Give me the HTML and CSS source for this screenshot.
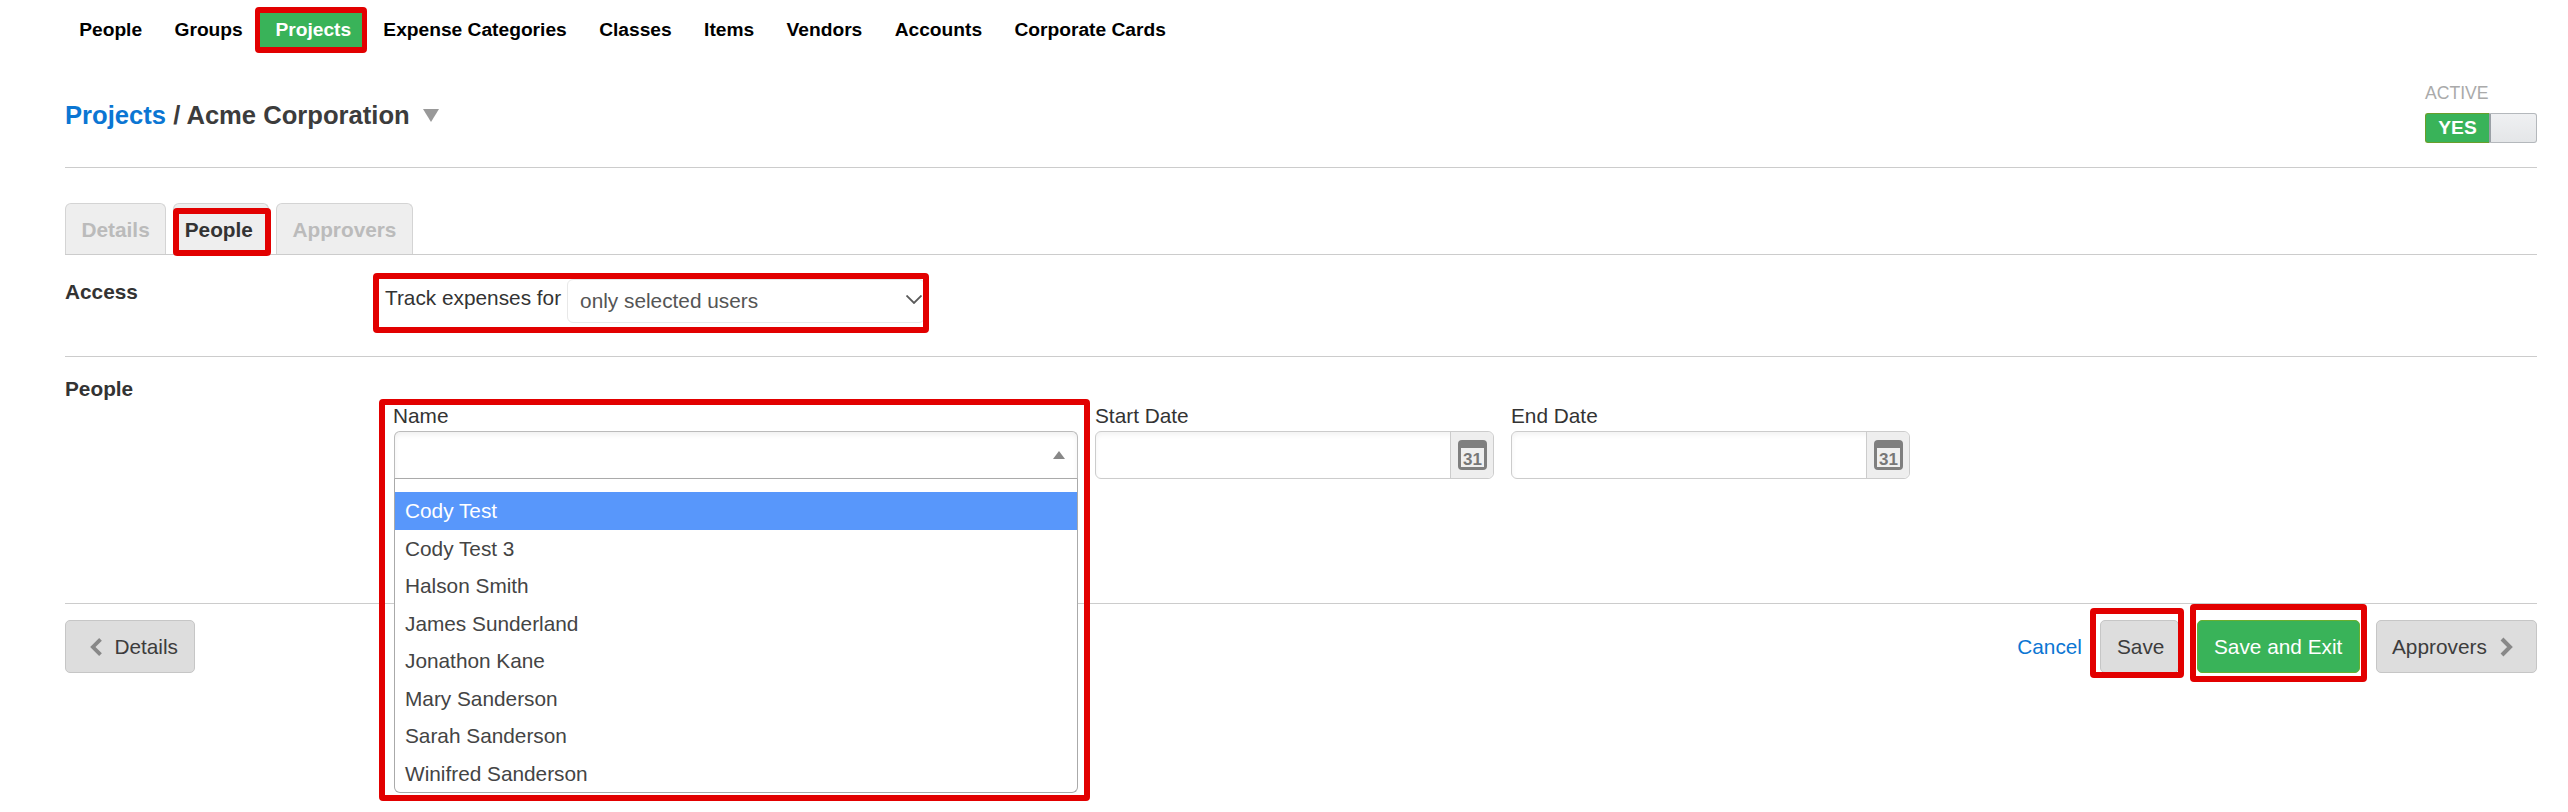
FILE: index.html
```html
<!DOCTYPE html>
<html lang="en">
<head>
    <meta charset="UTF-8">
    <meta name="viewport" content="width=device-width, initial-scale=1.0">
    <title>Projects / Acme Corporation</title>
    <link rel="stylesheet" href="styles.css">
</head>
<body>
    <nav class="top-nav">
        <a class="nav-link" href="#">People</a>
        <a class="nav-link" href="#">Groups</a>
        <a class="nav-link nav-link-active" href="#">Projects<span class="mark"></span></a>
        <a class="nav-link" href="#">Expense Categories</a>
        <a class="nav-link" href="#">Classes</a>
        <a class="nav-link" href="#">Items</a>
        <a class="nav-link" href="#">Vendors</a>
        <a class="nav-link" href="#">Accounts</a>
        <a class="nav-link" href="#">Corporate Cards</a>
    </nav>

    <main class="page">
        <header class="title-row">
            <h1 class="title"><a href="#">Projects</a> / Acme Corporation<span class="title-caret"></span></h1>
            <div class="active-box">
                <div class="active-label">ACTIVE</div>
                <div class="toggle">
                    <span class="toggle-on">YES</span>
                    <span class="toggle-off"></span>
                </div>
            </div>
        </header>

        <div class="tabs">
            <a class="tab" href="#">Details</a>
            <a class="tab tab-active" href="#">People<span class="mark"></span></a>
            <a class="tab" href="#">Approvers</a>
        </div>

        <section class="access-row">
            <div class="section-label">Access</div>
            <div class="track-row">
                <span class="track-label">Track expenses for</span>
                <div class="track-select">
                    <span>only selected users</span>
                    <svg class="track-chevron" width="16" height="9" viewBox="0 0 16 9"><polyline points="0.5,0.5 8,8 15.5,0.5" fill="none" stroke="#5a5a5a" stroke-width="1.8"/></svg>
                </div>
                <span class="mark"></span>
            </div>
        </section>

        <section class="people-row">
            <div class="section-label">People</div>
            <div class="fields">
                <div class="field field-name">
                    <label class="field-label">Name</label>
                    <div class="combo">
                        <span class="combo-arrow"></span>
                    </div>
                    <ul class="combo-list">
                        <li class="combo-item combo-item-active">Cody Test</li>
                        <li class="combo-item">Cody Test 3</li>
                        <li class="combo-item">Halson Smith</li>
                        <li class="combo-item">James Sunderland</li>
                        <li class="combo-item">Jonathon Kane</li>
                        <li class="combo-item">Mary Sanderson</li>
                        <li class="combo-item">Sarah Sanderson</li>
                        <li class="combo-item">Winifred Sanderson</li>
                    </ul>
                    <span class="mark"></span>
                </div>
                <div class="field field-date">
                    <label class="field-label">Start Date</label>
                    <div class="date-input">
                        <span class="date-addon">
                            <svg width="29" height="30" viewBox="0 0 29 30"><rect width="29" height="30" rx="4" fill="#7f7f7f"/><rect x="3" y="8" width="23" height="19" fill="#efefef"/><text x="14.5" y="24.5" text-anchor="middle" class="cal-text">31</text></svg>
                        </span>
                    </div>
                </div>
                <div class="field field-date">
                    <label class="field-label">End Date</label>
                    <div class="date-input">
                        <span class="date-addon">
                            <svg width="29" height="30" viewBox="0 0 29 30"><rect width="29" height="30" rx="4" fill="#7f7f7f"/><rect x="3" y="8" width="23" height="19" fill="#efefef"/><text x="14.5" y="24.5" text-anchor="middle" class="cal-text">31</text></svg>
                        </span>
                    </div>
                </div>
            </div>
        </section>

        <footer class="actions">
            <button class="btn btn-back">
                <svg width="13" height="20" viewBox="0 0 13 20"><polyline points="11,2 3,10 11,18" fill="none" stroke="#888" stroke-width="4"/></svg>
                Details
            </button>
            <div class="actions-right">
                <a class="cancel-link" href="#">Cancel</a>
                <button class="btn btn-save">Save<span class="mark"></span></button>
                <button class="btn btn-green">Save and Exit<span class="mark"></span></button>
                <button class="btn btn-next">
                    Approvers
                    <svg width="13" height="20" viewBox="0 0 13 20"><polyline points="2,2 10,10 2,18" fill="none" stroke="#888" stroke-width="4"/></svg>
                </button>
            </div>
        </footer>
    </main>
</body>
</html>
```

FILE: styles.css
```css
* {
    box-sizing: border-box;
}
body {
    min-height: 812px;
    margin: 0;
    background: #fff;
    color: #333;
    font-family: "Liberation Sans", Arial, sans-serif;
    font-size: 20.8px;
}
a {
    text-decoration: none;
}

/* red annotation boxes */
.mark {
    position: absolute;
    border: 6px solid #e20000;
    border-radius: 4px;
    z-index: 5;
    pointer-events: none;
}

.top-nav {
    display: flex;
    height: 47px;
    padding: 13px 0 0 63px;
}
.nav-link {
    position: relative;
    height: 34px;
    padding: 0 16.2px;
    color: #000;
    font-size: 19.2px;
    font-weight: bold;
    line-height: 34px;
}
.nav-link-active {
    margin: 0 5px 0 1.5px;
    padding: 0 11px 0 15px;
    background: #39b359;
    color: #fff;
}
.nav-link-active .mark {
    inset: -6px -5px;
    border-width: 6px 5px;
}

.page {
    padding: 0 31px 0 65px;
}
.title-row {
    display: flex;
    justify-content: space-between;
    align-items: flex-start;
    padding: 35px 0 24px;
    border-bottom: 1px solid #ccc;
}
.title {
    display: flex;
    align-items: center;
    margin: 17px 0 0;
    color: #3c3c3c;
    font-size: 25.6px;
    line-height: 32px;
    white-space: pre;
}
.title a {
    color: #0b76d3;
}
.title-caret {
    width: 0;
    height: 0;
    margin-left: 13px;
    border-left: 8px solid transparent;
    border-right: 8px solid transparent;
    border-top: 13px solid #999;
}
.active-box {
    width: 112px;
}
.active-label {
    margin-bottom: 9px;
    color: #aaa;
    font-size: 17.6px;
    line-height: 22px;
}
.toggle {
    display: flex;
    height: 30px;
}
.toggle-on {
    width: 64px;
    background: #39b359;
    border: 1px solid #6a9e2a;
    border-right: none;
    border-radius: 3px 0 0 3px;
    color: #fff;
    font-size: 19.2px;
    font-weight: bold;
    line-height: 28px;
    text-align: center;
}
.toggle-off {
    flex: 1;
    background: linear-gradient(to bottom, #eff0f2, #e4e6e8);
    border: 1px solid #b4b8bc;
    border-left: 2px solid #9aa0a6;
    border-radius: 0 3px 3px 0;
}

.tabs {
    display: flex;
    gap: 7px;
    margin-top: 35px;
    border-bottom: 1px solid #ccc;
}
.tab {
    position: relative;
    height: 51px;
    padding: 0 15.5px;
    background: #eee;
    border: 1px solid #d4d4d4;
    border-bottom: none;
    border-radius: 6px 6px 0 0;
    color: #bbb;
    font-weight: bold;
    line-height: 52px;
}
.tab-active {
    padding: 0 15px 0 10.5px;
    color: #333;
}
.tab-active .mark {
    inset: 4px -3px -2px -1px;
}

.section-label {
    font-weight: bold;
    line-height: 26px;
}
.access-row {
    display: grid;
    grid-template-columns: 320px 1fr;
    padding: 24px 0 33px;
    border-bottom: 1px solid #ccc;
}
.track-row {
    position: relative;
    display: flex;
    width: 540px;
}
.track-row .mark {
    inset: -6px -4px -10px -12px;
}
.track-label {
    margin-top: 6px;
    line-height: 26px;
}
.track-select {
    display: flex;
    justify-content: space-between;
    align-items: center;
    flex: 1;
    height: 44px;
    margin-left: 6px;
    padding: 0 2px 0 12px;
    border: 1px solid #e8e8e8;
    border-radius: 6px;
    color: #555;
}
.track-chevron {
    margin-top: -3px;
}

.people-row {
    display: grid;
    grid-template-columns: 329px 1fr;
    padding: 19px 0 124px;
    border-bottom: 1px solid #ccc;
}
.fields {
    display: flex;
    gap: 17px;
    padding-top: 27px;
}
.field {
    position: relative;
}
.field-name {
    width: 684px;
}
.field-name .field-label {
    margin-left: -1px;
}
.field-name .mark {
    top: -4px;
    left: -15px;
    right: -12px;
    height: 402px;
}
.field-date {
    width: 399px;
}
.field-label {
    display: block;
    height: 28px;
    line-height: 26px;
}
.combo {
    display: flex;
    justify-content: flex-end;
    align-items: center;
    height: 48px;
    padding-right: 12px;
    background: #fff;
    border: 1px solid #bbb;
    border-bottom-color: #aaa;
    border-radius: 6px 6px 0 0;
    box-shadow: inset 0 3px 5px rgba(0, 0, 0, 0.06);
}
.combo-arrow {
    width: 0;
    height: 0;
    border-left: 6px solid transparent;
    border-right: 6px solid transparent;
    border-bottom: 8px solid #888;
}
.combo-list {
    position: absolute;
    top: 76px;
    left: 0;
    right: 0;
    z-index: 3;
    margin: 0;
    padding: 13px 0 0;
    background: #fff;
    border: 1px solid #aaa;
    border-top: none;
    border-radius: 0 0 6px 6px;
    list-style: none;
}
.combo-item {
    height: 37.5px;
    padding-left: 10px;
    color: #444;
    line-height: 37.5px;
}
.combo-item-active {
    background: #5897fb;
    color: #fff;
}
.date-input {
    display: flex;
    justify-content: flex-end;
    height: 48px;
    background: #fff;
    border: 1px solid #ccc;
    border-radius: 6px;
    box-shadow: inset 0 3px 5px rgba(0, 0, 0, 0.05);
}
.date-addon {
    display: flex;
    justify-content: center;
    align-items: center;
    width: 43px;
    background: #eee;
    border-left: 1px solid #ccc;
    border-radius: 0 6px 6px 0;
}
.cal-text {
    fill: #777;
    font-family: "Liberation Sans", Arial, sans-serif;
    font-size: 17px;
    font-weight: bold;
}

.actions {
    display: flex;
    justify-content: space-between;
    padding-top: 16px;
}
.actions-right {
    display: flex;
    align-items: center;
    gap: 18px;
}
.cancel-link {
    color: #0b76d3;
}
.btn {
    position: relative;
    display: flex;
    align-items: center;
    height: 53px;
    margin: 0;
    padding: 0 16px;
    background: #ddd;
    border: 1px solid #c6c6c6;
    border-radius: 5px;
    color: #3c3c3c;
    font-family: inherit;
    font-size: 20.8px;
    white-space: nowrap;
}
.btn-back {
    gap: 12px;
    width: 130px;
    padding-left: 24px;
}
.btn-save {
    width: 79px;
}
.btn-save .mark {
    inset: -13px -6px -6px -11px;
}
.btn-green {
    width: 163px;
    background: #39b359;
    border-color: #6aae2e;
    color: #fff;
}
.btn-green .mark {
    inset: -17px -8px -10px -8px;
}
.btn-next {
    gap: 13px;
    width: 161px;
    margin-left: -2px;
    padding-left: 15px;
}
```
